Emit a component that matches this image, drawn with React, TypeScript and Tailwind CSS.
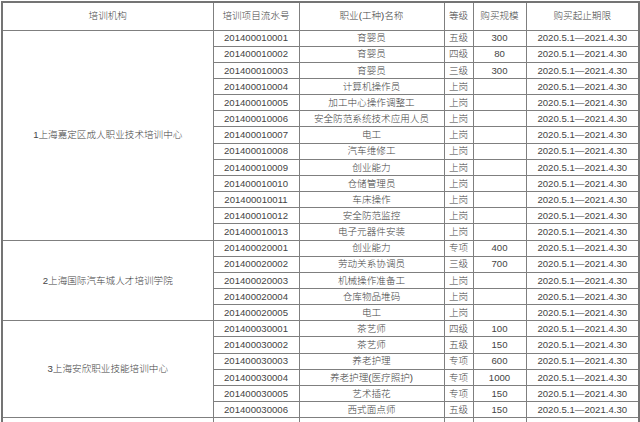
import React from "react";

type Row = [string, string, string, string];
type Group = { name: string; rows: Row[] };

const P = "2020.5.1—2021.4.30";

const groups: Group[] = [
  {
    name: "1上海嘉定区成人职业技术培训中心",
    rows: [
      ["201400010001", "育婴员", "五级", "300"],
      ["201400010002", "育婴员", "四级", "80"],
      ["201400010003", "育婴员", "三级", "300"],
      ["201400010004", "计算机操作员", "上岗", ""],
      ["201400010005", "加工中心操作调整工", "上岗", ""],
      ["201400010006", "安全防范系统技术应用人员", "上岗", ""],
      ["201400010007", "电工", "上岗", ""],
      ["201400010008", "汽车维修工", "上岗", ""],
      ["201400010009", "创业能力", "上岗", ""],
      ["201400010010", "仓储管理员", "上岗", ""],
      ["201400010011", "车床操作", "上岗", ""],
      ["201400010012", "安全防范监控", "上岗", ""],
      ["201400010013", "电子元器件安装", "上岗", ""],
    ],
  },
  {
    name: "2上海国际汽车城人才培训学院",
    rows: [
      ["201400020001", "创业能力", "专项", "400"],
      ["201400020002", "劳动关系协调员", "三级", "700"],
      ["201400020003", "机械操作准备工", "上岗", ""],
      ["201400020004", "仓库物品堆码", "上岗", ""],
      ["201400020005", "电工", "上岗", ""],
    ],
  },
  {
    name: "3上海安欣职业技能培训中心",
    rows: [
      ["201400030001", "茶艺师", "四级", "100"],
      ["201400030002", "茶艺师", "五级", "150"],
      ["201400030003", "养老护理", "专项", "600"],
      ["201400030004", "养老护理(医疗照护)", "专项", "1000"],
      ["201400030005", "艺术插花", "专项", "150"],
      ["201400030006", "西式面点师", "五级", "150"],
    ],
  },
];

const cell = "border border-[#7f7f7f] text-center p-0 leading-none whitespace-nowrap";

export default function App() {
  return (
    <div
      className="w-[640px] h-[422px] overflow-hidden bg-white pt-[1px] pl-[1px]"
      style={{ fontFamily: '"Liberation Sans", "Noto Sans CJK SC", sans-serif' }}
    >
      <table className="border-collapse table-fixed w-[637px] text-[9.6px] font-light text-[#444] border-2 border-[#747474]">
        <colgroup>
          <col className="w-[211px]" />
          <col className="w-[86px]" />
          <col className="w-[145px]" />
          <col className="w-[29px]" />
          <col className="w-[53px]" />
          <col className="w-[113px]" />
        </colgroup>
        <tbody>
          <tr className="h-[28px]">
            <td className={cell}>培训机构</td>
            <td className={cell}>培训项目流水号</td>
            <td className={cell}>职业(工种)名称</td>
            <td className={cell}>等级</td>
            <td className={cell}>购买规模</td>
            <td className={cell}>购买起止期限</td>
          </tr>
          {groups.map((g) =>
            g.rows.map((r, i) => (
              <tr key={r[0]} className="h-[16.17px]">
                {i === 0 && (
                  <td className={cell} rowSpan={g.rows.length}>
                    {g.name}
                  </td>
                )}
                <td className={cell}>{r[0]}</td>
                <td className={cell}>{r[1]}</td>
                <td className={cell}>{r[2]}</td>
                <td className={cell}>{r[3]}</td>
                <td className={cell}>{P}</td>
              </tr>
            ))
          )}
          <tr className="h-[16px]">
            <td className={cell}></td>
            <td className={cell}></td>
            <td className={cell}></td>
            <td className={cell}></td>
            <td className={cell}></td>
            <td className={cell}></td>
          </tr>
        </tbody>
      </table>
    </div>
  );
}
